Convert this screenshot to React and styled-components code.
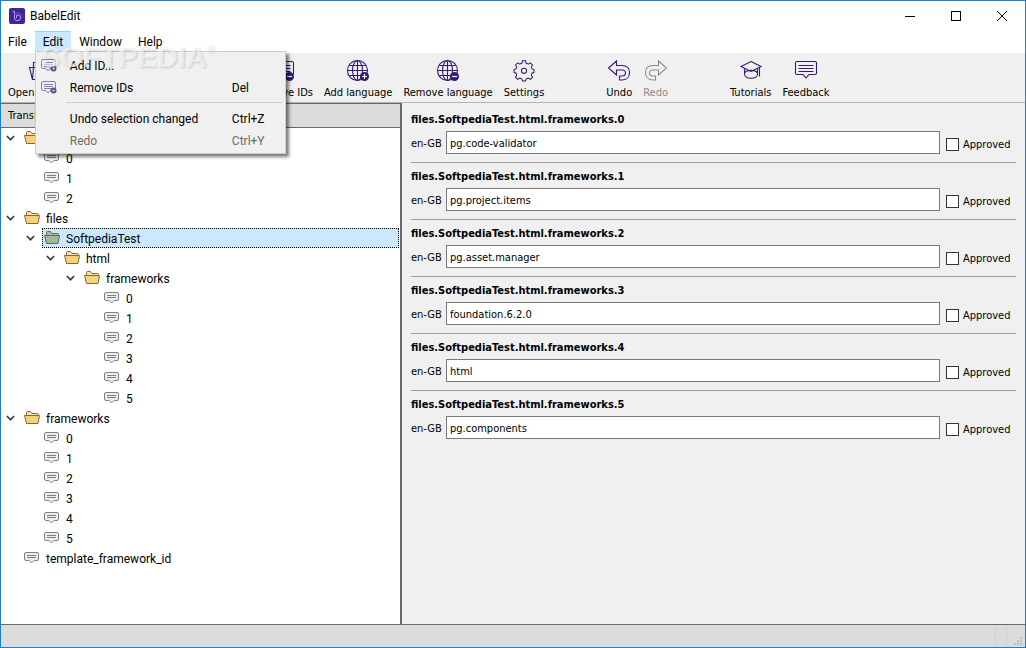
import { useState } from "react";
import styled, { createGlobalStyle, css } from "styled-components";

const uiFont = `Roboto, "Open Sans", sans-serif`;
const formFont = `"DejaVu Sans Condensed", "Noto Sans", sans-serif`;
const purple = "#351a75";

const GlobalStyle = createGlobalStyle`
  * {
    box-sizing: border-box;
  }

  body {
    margin: 0;
    font-family: ${uiFont};
    font-size: 12px;
    color: #000;
  }

  button,
  input {
    font: inherit;
    color: inherit;
  }

  svg {
    display: block;
    flex-shrink: 0;
  }
`;

const Window = styled.div`
  display: flex;
  flex-direction: column;
  min-height: 100vh;
  border: 1px solid #1b7fd2;
  background: #f0f0f0;
`;

const TitleBar = styled.header`
  display: flex;
  align-items: center;
  height: 30px;
  padding-left: 8px;
  background: #fff;
`;

const Title = styled.h1`
  flex: 1;
  margin: 0 0 0 5px;
  font-size: 12px;
  font-weight: 400;
`;

const WindowButton = styled.button`
  display: flex;
  align-items: center;
  justify-content: center;
  width: 46px;
  height: 28px;
  padding: 0;
  border: none;
  background: none;
`;

const MenuBar = styled.nav`
  display: flex;
  height: 21px;
  padding-left: 7px;
  background: #fff;
`;

const MenuItem = styled.div`
  position: relative;

  &:first-child {
    margin-left: -8px;
  }
`;

const MenuButton = styled.button`
  height: 21px;
  padding: 2px 8px 0;
  border: 1px solid ${({ $open }) => ($open ? "#99d1ff" : "transparent")};
  border-width: 1px 0;
  background: ${({ $open }) => ($open ? "#cce8ff" : "none")};
  line-height: 17px;
`;

const Dropdown = styled.div`
  position: absolute;
  top: 20px;
  left: 0;
  z-index: 2;
  width: 251px;
  padding: 3px 3px 1px;
  border: 1px solid #ccc;
  background: #f0f0f0;
  box-shadow: 3px 3px 3px rgba(0, 0, 0, 0.5);
`;

const DropdownItem = styled.button`
  display: grid;
  grid-template-columns: 31px 1fr 50px;
  align-items: center;
  width: 100%;
  height: 22px;
  padding: 0;
  border: none;
  background: none;
  text-align: left;
  white-space: nowrap;

  &:disabled {
    color: #6d6d6d;
  }
`;

const ItemIcon = styled.span`
  padding-left: 2px;
  opacity: 0.75;
`;

const Separator = styled.hr`
  height: 1px;
  margin: 3px 0 5px 27px;
  border: none;
  background: #d0d0d0;
`;

const Watermark = styled.div`
  position: absolute;
  top: 14px;
  left: 6px;
  z-index: 3;
  pointer-events: none;
  font-family: "Liberation Sans", sans-serif;
  font-size: 29px;
  font-weight: 700;
  line-height: 24px;
  color: rgba(255, 255, 255, 0.6);
  text-shadow: 1px 1px 2px rgba(0, 0, 0, 0.16);
  white-space: nowrap;

  sup {
    font-size: 10px;
    line-height: 10px;
    vertical-align: 14px;
  }
`;

const Toolbar = styled.div`
  display: flex;
  gap: 62px;
  height: 51px;
  padding: 0 7px;
  border-top: 1px solid #fff;
  border-bottom: 1px solid #b4b4b4;
  font-family: ${formFont};
  font-size: 11px;
`;

const ToolGroup = styled.div`
  display: flex;
  gap: 11px;
`;

const ProjectTools = styled.div`
  display: flex;
  justify-content: space-between;
  width: 305px;
`;

const ToolButton = styled.button`
  display: flex;
  flex-direction: column;
  align-items: center;
  gap: 2px;
  padding: 6px 0 0;
  border: none;
  background: none;
  line-height: 16px;
  white-space: nowrap;

  &:disabled {
    color: #8b8b8b;
  }
`;

const Content = styled.main`
  display: flex;
  flex: 1;
`;

const TreePanel = styled.section`
  flex: 0 1 401px;
  border-top: 1px solid #696969;
  border-right: 2px solid #696969;
  background: #fff;
`;

const PanelHeader = styled.h2`
  height: 24px;
  margin: 0;
  padding: 1px 0 0 7px;
  border-bottom: 1px solid #696969;
  background: #dcdcdc;
  font-family: ${formFont};
  font-size: 11px;
  font-weight: 400;
  line-height: 22px;
`;

const TreeList = styled.ul`
  margin: 0;
  padding: 0 1px 0 0;
  list-style: none;

  & & {
    padding: 0 0 0 20px;
  }
`;

const TreeRow = styled.div`
  display: flex;
  height: 20px;
`;

const Expander = styled.button`
  display: flex;
  align-items: center;
  width: 21px;
  padding: 0 0 0 5px;
  border: none;
  background: none;
  visibility: ${({ $hidden }) => ($hidden ? "hidden" : "visible")};
`;

const Node = styled.button`
  display: flex;
  flex: 1;
  align-items: center;
  gap: 6px;
  padding: 0 1px;
  border: 1px solid transparent;
  background: none;
  line-height: 16px;
  text-align: left;

  ${({ $selected }) =>
    $selected &&
    css`
      border: 1px dotted #000;
      background: #cce8ff;
    `}
`;

const NodeName = styled.span`
  padding-top: 2px;
`;

const Editor = styled.section`
  flex: 1;
  min-width: 0;
  padding: 3px 9px;
  font-family: ${formFont};
  font-size: 11px;
`;

const Entry = styled.article`
  padding: 6px 0 8px;

  & + & {
    border-top: 1px solid #a0a0a0;
  }
`;

const EntryTitle = styled.h3`
  margin: 0 0 3px;
  font-size: 11px;
  font-weight: 700;
  line-height: 16px;
`;

const EntryRow = styled.div`
  display: flex;
  align-items: center;
`;

const Language = styled.label`
  width: 35px;
  padding-top: 2px;
  white-space: nowrap;
`;

const TextInput = styled.input`
  flex: 1;
  min-width: 0;
  height: 23px;
  padding: 2px 3px 0;
  border: 1px solid #7a7a7a;
  background: #fff;
`;

const Approved = styled.label`
  display: flex;
  align-items: center;
  gap: 4px;
  width: 76px;
  padding: 4px 0 0 6px;
  line-height: 16px;
  white-space: nowrap;
`;

const Checkbox = styled.input`
  flex-shrink: 0;
  appearance: none;
  width: 13px;
  height: 13px;
  margin: 0;
  border: 1px solid #333;
  background: #fff;

  &:checked {
    background: #333;
    box-shadow: inset 0 0 0 2px #fff;
  }
`;

const StatusBar = styled.footer`
  display: flex;
  justify-content: flex-end;
  height: 23px;
  border-top: 1px solid #696969;
  background: #dcdcdc;
`;

const StatusCell = styled.span`
  display: flex;
  align-items: flex-end;
  justify-content: flex-end;
  width: ${({ $wide }) => ($wide ? "19px" : "11px")};
  margin: 2px 0;
  padding-right: 3px;
  border-left: 1px solid #d0d0d0;
`;

const BabelLogo = () => (
  <svg width="16" height="16" viewBox="0 0 16 16" fill="none">
    <rect width="16" height="16" rx="2" fill="#43239a" />
    <path d="M3.5 3.5h2v6.500a3 3 0 1 0 3-3.200c-.8 0-1 .4-1 1.200v2" stroke="#b9a6e8" />
    <path
      d="M5.5 2v2M5.5 7c.8-1.500 2-2.200 3.500-2.200 2.500 0 4.300 2 4.300 4.500"
      stroke="#7455bd"
      strokeWidth=".8"
    />
  </svg>
);

const Badge = ({ cx, cy, r, minus }) => (
  <>
    <circle cx={cx} cy={cy} r={r} fill={purple} stroke="none" />
    <path
      d={`M${cx - r + 2} ${cy}h${2 * r - 4}${minus ? "" : `M${cx} ${cy - r + 2}v${2 * r - 4}`}`}
      stroke="#fff"
      strokeWidth="1.2"
    />
  </>
);

const ToolSvg = ({ children, color = purple }) => (
  <svg width="24" height="24" viewBox="0 0 24 24" fill="none" stroke={color} strokeWidth="1.1">
    {children}
  </svg>
);

const FolderTool = () => (
  <ToolSvg>
    <path d="M4.5 20.5 1.5 8.5h4v-5h6l2 2h8v3M4.5 20.5h15l3-12h-17z" />
  </ToolSvg>
);

const SaveTool = () => (
  <ToolSvg>
    <path d="M2.5 2.5h15l4 4v15h-19zM6.5 2.5v6h10v-6M6.5 21.5v-8h11v8" />
  </ToolSvg>
);

const CommentTool = ({ badge }) => (
  <ToolSvg>
    <path d="M3 2.5h18q1.500 0 1.500 1.500v10q0 1.500-1.500 1.500h-6l-3 3.500-3-3.500H3Q1.500 15.500 1.500 14V4Q1.500 2.500 3 2.500z" />
    <path d="M4.5 6.5h15M4.5 9.5h15M4.5 12.500h15" />
    {badge && <Badge cx={18.5} cy={17.5} r={4.5} minus={badge === "minus"} />}
  </ToolSvg>
);

const GlobeTool = ({ minus }) => (
  <ToolSvg>
    <circle cx="11.5" cy="11.5" r="10" />
    <ellipse cx="11.5" cy="11.5" rx="5" ry="10" />
    <path d="M11.5 1.5v20M1.5 11.5h20M3.5 6.5h16M3.5 16.5h16" />
    <Badge cx={18.5} cy={17.5} r={4.5} minus={minus} />
  </ToolSvg>
);

const GearTool = () => (
  <ToolSvg>
    <g transform="translate(1 0) scale(.92)">
      <path d="M10.300 2h3.400l.6 2.600q1.300.3 2.300.9l2.300-1.400 2.400 2.400-1.400 2.300q.6 1 .9 2.200l2 .5v3.200l-2 .5q-.3 1.200-.9 2.200l1.400 2.300-2.400 2.400-2.300-1.400q-1 .6-2.300.9l-.6 2.400h-3.400l-.6-2.400q-1.300-.3-2.300-.9l-2.300 1.400-2.400-2.400 1.400-2.300q-.6-1-.9-2.200l-2-.5v-3.200l2-.5q.3-1.200.9-2.200l-1.400-2.300 2.400-2.400 2.300 1.400q1-.6 2.300-.9z" />
      <circle cx="12" cy="12.800" r="2.800" />
    </g>
  </ToolSvg>
);

const arrowPath =
  "M1.5 9 9.5 2v4.500h5.500c4.500 0 7.500 2.500 7.500 7s-3 7.500-7.500 7.500h-2.500v-4h2.500c2.200 0 3.500-1.100 3.500-3s-1.300-3-3.500-3H9.500v5z";

const UndoTool = () => (
  <ToolSvg>
    <path d={arrowPath} />
  </ToolSvg>
);

const RedoTool = () => (
  <ToolSvg color="#8b8b8b">
    <path d={arrowPath} transform="matrix(-1 0 0 1 24 0)" />
  </ToolSvg>
);

const TutorialTool = () => (
  <ToolSvg>
    <path d="M12 2.5 22 7.5 12 12.500 2 7.500z" />
    <path d="M5.500 9.500v6c1 5 12 5 13 0v-6M5.500 14c2.500-3.500 10.500-3.500 13 0M20.500 8.500v9" />
  </ToolSvg>
);

const MenuComment = ({ minus }) => (
  <svg width="16" height="16" viewBox="0 0 16 16" fill="none" stroke="#69569b">
    <path d="M2 1.500h11q1.500 0 1.500 1.500v6q0 1.500-1.500 1.500H9l-2 2.500-2-2.500H2Q.5 10.500.5 9V3Q.5 1.500 2 1.500zM3 4.500h9M3 6.500h9M3 8.500h7" />
    <Badge cx={12.5} cy={10.5} r={3} minus={minus} />
  </svg>
);

const FolderIcon = ({ selected }) => (
  <svg width="16" height="16" viewBox="0 0 16 16" stroke={selected ? "#686a58" : "#82683f"}>
    <path
      d="M2.500 13V2.500q0-1 1-1h3l1.500 2h5.500q1 0 1 1V8"
      fill={selected ? "#a9bbaa" : "#f8e3a4"}
    />
    <path d="M.5 5.500h15l-1.500 8H2.500z" fill={selected ? "#a2b69c" : "#f5d477"} />
  </svg>
);

const CommentIcon = () => (
  <svg width="16" height="16" viewBox="0 0 16 16" fill="#ededed" stroke="#808080">
    <path d="M2 2.500h11q1.500 0 1.500 1.500v5q0 1.500-1.500 1.500h-3L7.500 13 5 10.500H2Q.5 10.500.5 9V4Q.5 2.500 2 2.500z" />
    <path d="M3 5.500h9M3 7.500h9" />
  </svg>
);

const Chevron = () => (
  <svg width="9" height="8" viewBox="0 0 9 8" fill="none" stroke="#404040" strokeWidth="1.7">
    <path d="M.8 2 4.500 5.700 8.200 2" />
  </svg>
);

const ids = (prefix, count) =>
  Array.from({ length: count }, (_, i) => ({ id: `${prefix}.${i}`, name: String(i) }));

const tree = [
  { id: "code", name: "code", children: ids("code", 3) },
  {
    id: "files",
    name: "files",
    children: [
      {
        id: "files.SoftpediaTest",
        name: "SoftpediaTest",
        children: [
          {
            id: "files.SoftpediaTest.html",
            name: "html",
            children: [
              {
                id: "files.SoftpediaTest.html.frameworks",
                name: "frameworks",
                children: ids("files.SoftpediaTest.html.frameworks", 6),
              },
            ],
          },
        ],
      },
    ],
  },
  { id: "frameworks", name: "frameworks", children: ids("frameworks", 6) },
  { id: "template_framework_id", name: "template_framework_id" },
];

const translations = [
  "pg.code-validator",
  "pg.project.items",
  "pg.asset.manager",
  "foundation.6.2.0",
  "html",
  "pg.components",
];

const TreeItem = ({ node, selected, onSelect }) => {
  const [open, setOpen] = useState(true);
  const isSelected = selected === node.id;

  return (
    <li>
      <TreeRow>
        <Expander
          $hidden={!node.children}
          aria-label={`Toggle ${node.name}`}
          aria-expanded={open}
          onClick={() => setOpen(!open)}
        >
          <Chevron />
        </Expander>
        <Node $selected={isSelected} onClick={() => onSelect(node.id)}>
          {node.children ? <FolderIcon selected={isSelected} /> : <CommentIcon />}
          <NodeName>{node.name}</NodeName>
        </Node>
      </TreeRow>
      {node.children && open && (
        <TreeList>
          {node.children.map((child) => (
            <TreeItem key={child.id} node={child} selected={selected} onSelect={onSelect} />
          ))}
        </TreeList>
      )}
    </li>
  );
};

const Tool = ({ icon, label, disabled }) => (
  <ToolButton disabled={disabled}>
    {icon}
    {label}
  </ToolButton>
);

const EditMenu = () => (
  <Dropdown>
    <DropdownItem>
      <ItemIcon>
        <MenuComment />
      </ItemIcon>
      <span>Add ID...</span>
    </DropdownItem>
    <DropdownItem>
      <ItemIcon>
        <MenuComment minus />
      </ItemIcon>
      <span>Remove IDs</span>
      <span>Del</span>
    </DropdownItem>
    <Separator />
    <DropdownItem>
      <span />
      <span>Undo selection changed</span>
      <span>Ctrl+Z</span>
    </DropdownItem>
    <DropdownItem disabled>
      <span />
      <span>Redo</span>
      <span>Ctrl+Y</span>
    </DropdownItem>
  </Dropdown>
);

const App = () => {
  const [menu, setMenu] = useState("Edit");
  const [selected, setSelected] = useState("files.SoftpediaTest");

  return (
    <Window>
      <GlobalStyle />
      <TitleBar>
        <BabelLogo />
        <Title>BabelEdit</Title>
        <WindowButton aria-label="Minimize">
          <svg width="10" height="10" stroke="#000">
            <path d="M0 5.5h10" />
          </svg>
        </WindowButton>
        <WindowButton aria-label="Maximize">
          <svg width="10" height="10" fill="none" stroke="#000">
            <rect x=".5" y=".5" width="9" height="9" />
          </svg>
        </WindowButton>
        <WindowButton aria-label="Close">
          <svg width="10" height="10" stroke="#000">
            <path d="M0 0 10 10M10 0 0 10" />
          </svg>
        </WindowButton>
      </TitleBar>

      <MenuBar>
        {["File", "Edit", "Window", "Help"].map((name) => (
          <MenuItem key={name}>
            <MenuButton
              $open={menu === name}
              onClick={() => setMenu(menu === name ? "" : name)}
            >
              {name}
            </MenuButton>
            {name === "Edit" && menu === name && <EditMenu />}
            {name === "Edit" && (
              <Watermark>
                SOFTPEDIA<sup>®</sup>
              </Watermark>
            )}
          </MenuItem>
        ))}
      </MenuBar>

      <Toolbar>
        <ToolGroup>
          <ProjectTools>
            <Tool icon={<FolderTool />} label="Open project" />
            <Tool icon={<SaveTool />} label="Save project" />
            <Tool icon={<CommentTool badge="plus" />} label="Add ID" />
            <Tool icon={<CommentTool badge="minus" />} label="Remove IDs" />
          </ProjectTools>
          <Tool icon={<GlobeTool />} label="Add language" />
          <Tool icon={<GlobeTool minus />} label="Remove language" />
          <Tool icon={<GearTool />} label="Settings" />
        </ToolGroup>
        <ToolGroup>
          <Tool icon={<UndoTool />} label="Undo" />
          <Tool icon={<RedoTool />} label="Redo" disabled />
        </ToolGroup>
        <ToolGroup>
          <Tool icon={<TutorialTool />} label="Tutorials" />
          <Tool icon={<CommentTool />} label="Feedback" />
        </ToolGroup>
      </Toolbar>

      <Content>
        <TreePanel>
          <PanelHeader>Translation IDs</PanelHeader>
          <TreeList>
            {tree.map((node) => (
              <TreeItem key={node.id} node={node} selected={selected} onSelect={setSelected} />
            ))}
          </TreeList>
        </TreePanel>

        <Editor>
          {translations.map((text, i) => (
            <Entry key={text}>
              <EntryTitle>files.SoftpediaTest.html.frameworks.{i}</EntryTitle>
              <EntryRow>
                <Language htmlFor={`text-${i}`}>en-GB</Language>
                <TextInput id={`text-${i}`} type="text" defaultValue={text} />
                <Approved>
                  <Checkbox type="checkbox" />
                  Approved
                </Approved>
              </EntryRow>
            </Entry>
          ))}
        </Editor>
      </Content>

      <StatusBar>
        <StatusCell />
        <StatusCell $wide>
          <svg width="8" height="8" fill="#bfbfbf">
            <path d="M6 0h2v2H6zM3 3h2v2H3zM6 3h2v2H6zM0 6h2v2H0zM3 6h2v2H3zM6 6h2v2H6z" />
          </svg>
        </StatusCell>
      </StatusBar>
    </Window>
  );
};

export default App;
